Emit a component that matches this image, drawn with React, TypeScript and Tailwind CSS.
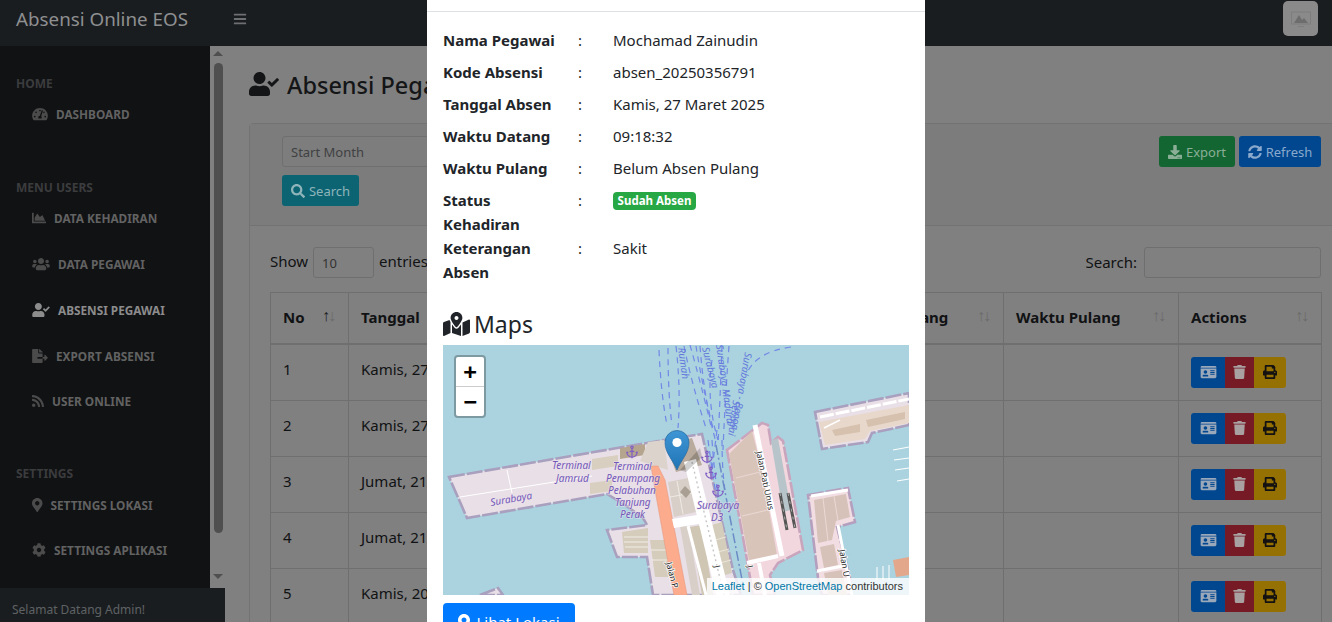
import { Anchor } from 'lucide-react';
import {
  FaBars, FaChartArea, FaCog, FaDownload, FaFileExport, FaIdCard, FaMapMarkedAlt, FaMapMarkerAlt,
  FaPrint, FaRss, FaSearch, FaSyncAlt, FaTachometerAlt, FaTrash, FaUserCheck, FaUsers,
} from 'react-icons/fa';

const rows = [
  { no: 1, tanggal: 'Kamis, 27 Maret 2025', nama: 'Mochamad Zainudin', datang: '09:18:32' },
  { no: 2, tanggal: 'Kamis, 27 Maret 2025', nama: 'Siti Aminah', datang: '08:02:11' },
  { no: 3, tanggal: 'Jumat, 21 Maret 2025', nama: 'Mochamad Zainudin', datang: '08:15:40' },
  { no: 4, tanggal: 'Jumat, 21 Maret 2025', nama: 'Siti Aminah', datang: '07:58:03' },
  { no: 5, tanggal: 'Kamis, 20 Maret 2025', nama: 'Mochamad Zainudin', datang: '08:21:17' },
];

const details = [
  { label: 'Nama Pegawai', value: 'Mochamad Zainudin' },
  { label: 'Kode Absensi', value: 'absen_20250356791' },
  { label: 'Tanggal Absen', value: 'Kamis, 27 Maret 2025' },
  { label: 'Waktu Datang', value: '09:18:32' },
  { label: 'Waktu Pulang', value: 'Belum Absen Pulang' },
];

function SortArrows({ active }: { active?: boolean }) {
  return (
    <span className="text-[16px] leading-[20px] tracking-[-2px] whitespace-nowrap pr-[2px] font-normal">
      <span className={active ? 'text-[#222]' : 'text-[#6b6b6b]'}>↑</span>
      <span className="text-[#6b6b6b]">↓</span>
    </span>
  );
}

function NavItem({ icon, label, active }: { icon: React.ReactNode; label: string; active?: boolean }) {
  return (
    <div className={`h-[45.8px] pb-[1px] pl-8 flex items-center gap-2 text-[11.8px] font-bold ${active ? 'text-[#8c8c8c]' : 'text-[#626262]'}`}>
      <span className={active ? 'text-[#8c8c8c]' : 'text-[#4b4b4b]'}>{icon}</span>
      <span>{label}</span>
    </div>
  );
}

function NavHeader({ label, className }: { label: string; className?: string }) {
  return <div className={`h-[17px] pl-4 text-[12px] leading-[17px] font-bold text-[#3b3c3e] ${className || ''}`}>{label}</div>;
}

function MapTiles() {
  const lane = 'fill-none stroke-[#7488e6] stroke-[1.2]';
  const label = { fontFamily: '"Noto Sans", sans-serif', fontStyle: 'italic', fontSize: 10, fill: '#7458b8', stroke: '#e9e2ee', strokeWidth: 1.5, paintOrder: 'stroke', strokeOpacity: 0.6 } as const;
  const channel = { fontFamily: '"Noto Sans", sans-serif', fontStyle: 'italic', fontSize: 10, fill: '#6478dc' } as const;
  const road = { fontFamily: '"Noto Sans", sans-serif', fontSize: 8.5, fill: '#222', stroke: '#fff', strokeWidth: 1.5, paintOrder: 'stroke' } as const;
  const edge = { stroke: '#a99fbe', strokeWidth: 2.6, strokeDasharray: '16 2' };
  return (
    <svg viewBox="443 345 466 250" className="block w-[466px] h-[250px]">
      <rect x="443" y="345" width="466" height="250" fill="#aad3df" />

      {/* piers */}
      <path d="M449 477L664 440L702 434L733 570L741 595H653L647 557H617L607 530L647 525L643 518L625 505L607 494L467 518Z" fill="#e9dfe6" {...edge} />
      <path d="M727 450L762 423L768 425L771 443L778 437L783 441L803 550L778 563L770 575L775 595H753L747 560Z" fill="#f2d7de" {...edge} stroke="#c9a5bd" />
      <path d="M815 412L909 393V425L872 433L868 442L822 449Z" fill="#e9dfe6" {...edge} />
      <path d="M808 495L848 488L855 522L837 527L850 578V595H822L818 578Z" fill="#f2dde3" {...edge} stroke="#b49fbe" />
      <path d="M480 595L498 588L503 595Z" fill="#e9dfe6" {...edge} />

      {/* west pier detail */}
      <path d="M460 497L592 476M507 470L512 493" stroke="#fff" strokeWidth="1" fill="none" />
      <path d="M620 448L645 444V455L620 459Z" fill="#b5a58f" />
      <path d="M592 459L618 455V466L592 470ZM590 483L612 480V491L590 494Z" fill="#d9cfc0" />
      <path d="M648 442L664 440L668 470L652 465L640 461Z" fill="#dcd4cc" />
      <path d="M622 532L648 528L648 553H624Z" fill="#d5ccbc" />
      <path d="M624 537H648M624 542H648M625 547H648" stroke="#f1ece6" strokeWidth="1" />
      <path d="M650 540H668L672 577H655Z" fill="#d5ccbc" />
      <path d="M651 550H670M652 560H671" stroke="#f1ece6" strokeWidth="1" />

      {/* central blocks */}
      <path d="M668 482L688 478L696 512L674 517Z" fill="#d8d0c8" />
      <path d="M670 497L692 493M677 481L683 514" stroke="#efeae5" strokeWidth="1" />
      <path d="M685 486L691 492L686 498L680 492Z" fill="#a99f92" />
      <path d="M680 526L688 525L700 595H692Z" fill="#d8d0c8" />
      <path d="M690 527L702 525L713 595H702Z" fill="#cfc6b4" />
      <path d="M712 525L722 522L732 573L722 576Z" fill="#d5cdbb" />
      <path d="M715 540L726 537M718 552L729 549M720 563L731 560" stroke="#ece7dc" strokeWidth="1" />
      <path d="M666 445L692 438L702 465L676 472Z" fill="#b8aa9c" />

      {/* roads */}
      <path d="M651 466L658 466L665 480L687 595H674L655 490Z" fill="#fcab8d" stroke="#e79a7f" strokeWidth="0.6" />
      <path d="M684 462L696 459L730 595H716Z" fill="#fff" />
      <path d="M692 462L724 595" stroke="#c6c6c6" strokeWidth="1.4" strokeDasharray="2 3" />
      <path d="M672 519L703 514L705 523L674 528Z" fill="#fff" />
      <path d="M688 526L706 595" stroke="#fff" strokeWidth="3" />

      {/* east block */}
      <path d="M729 454L752 431L762 470L777 555L749 560Z" fill="#d9c4ba" />
      <path d="M736 478L760 472M742 516L768 510" stroke="#ead9d3" strokeWidth="1" />
      <path d="M755 425L782 556" stroke="#fff" strokeWidth="5" />
      <path d="M747 563L778 556" stroke="#fff" strokeWidth="4" />
      <path d="M759 563L765 595" stroke="#fff" strokeWidth="4" />
      <path d="M771 441L778 438L791 510L783 512Z" fill="#b7c5ca" />
      <path d="M780 493L787 530M788 493L795 528" stroke="#555" strokeWidth="3" />
      <path d="M780 493L787 530M788 493L795 528" stroke="#ccc" strokeWidth="0.7" strokeDasharray="3 5" />

      {/* north east pier detail */}
      <path d="M820 417L909 399" stroke="#fff" strokeWidth="3" strokeDasharray="14 2" />
      <path d="M819 422L909 405V423L870 431L865 439L825 445Z" fill="#e8d8cb" />
      <path d="M832 430L860 424V432L835 436ZM866 420L905 412V419L868 427Z" fill="#d6c0ae" />
      <path d="M824 428L840 420" stroke="#fff" strokeWidth="1.5" />

      {/* south east block detail */}
      <path d="M814 500L846 494L850 517L836 521L832 540L818 543Z" fill="#d6c2b8" />
      <path d="M823 498L828 541M834 496L838 521" stroke="#ecd9d5" strokeWidth="1" />
      <path d="M820 547L834 544L838 565L824 568Z" fill="#d6c2b8" />
      <path d="M824 573L842 570L847 595H828Z" fill="#d6c2b8" />
      <path d="M811 496L848 490M838 525L852 595M817 571L843 566" stroke="#fff" strokeWidth="3" fill="none" />
      <path d="M893 560L909 557V575L896 577Z" fill="#e3a88c" />
      <path d="M893 450L909 447M894 460L909 458M895 470L909 468M897 481L909 479M877 567V580M883 566V580M889 565V580" stroke="#fff" strokeWidth="1" />

      {/* shipping lanes */}
      <g className={lane} strokeDasharray="6 5">
        <path d="M659 350Q661 395 667 425" />
        <path d="M668 348Q668 395 672 425" />
        <path d="M676 346Q681 390 678 428" />
        <path d="M684 346Q692 385 706 428" />
        <path d="M690 345Q700 380 712 430" />
        <path d="M696 346Q702 385 714 432" />
        <path d="M700 346Q704 400 716 442" />
        <path d="M712 360Q706 400 718 440" />
        <path d="M722 346Q720 400 718 445" />
        <path d="M729 346Q725 400 723 450" />
        <path d="M708 440Q712 470 716 495" />
        <path d="M712 440Q714 470 718 495" />
        <path d="M722 440Q722 470 725 490" />
        <path d="M717 430L712 470" />
        <path d="M791 347Q755 352 746 375" />
      </g>
      <path d="M716 445L744 590" stroke="#6c8bc6" strokeWidth="1.5" strokeDasharray="10 3 2 3" fill="none" />
      <text transform="translate(678 348) rotate(82)" style={channel}>Rumah</text>
      <text transform="translate(702 348) rotate(76)" style={channel}>Surabaya</text>
      <text transform="translate(716 345) rotate(82)" style={channel}>Surabaya Madura</text>
      <text transform="translate(745 352) rotate(100)" style={channel}>Surabaya - Benoa</text>
      <text transform="translate(733 400) rotate(98)" style={channel}>Sebagai</text>

      {/* anchors */}
      <Anchor x="625" y="445" width="14" height="14" color="#7e5cc6" strokeWidth={2} />
      <Anchor x="700" y="450" width="14" height="14" color="#7e5cc6" strokeWidth={2} />
      <Anchor x="704" y="466" width="14" height="14" color="#7e5cc6" strokeWidth={2} />
      <Anchor x="711" y="484" width="14" height="14" color="#7e5cc6" strokeWidth={2} />

      {/* place labels */}
      <text x="552" y="469" style={label}>Terminal</text>
      <text x="556" y="482" style={label}>Jamrud</text>
      <text transform="translate(491 506) rotate(-10)" style={label}>Surabaya</text>
      <text x="613" y="470" style={label}>Terminal</text>
      <text x="606" y="482" style={label}>Penumpang</text>
      <text x="608" y="494" style={label}>Pelabuhan</text>
      <text x="615" y="506" style={label}>Tanjung</text>
      <text x="620" y="518" style={label}>Perak</text>
      <text x="697" y="509" style={label}>Surabaya</text>
      <text x="711" y="521" style={label}>D3</text>

      {/* road labels */}
      <text transform="translate(666 563) rotate(76)" style={road}>Jalan P</text>
      <text transform="translate(756 452) rotate(78)" style={road}>Jalan Pati Unus</text>
      <text transform="translate(839 550) rotate(80)" style={road}>Jalan U</text>
      <text transform="translate(714 566) rotate(78)" style={road}>J</text>
      <text transform="translate(747 566) rotate(78)" style={road}>J</text>

      {/* marker */}
      <path d="M680 470L700 448L702 457L686 472Z" fill="#000" opacity="0.18" />
      <defs>
        <linearGradient id="pin" x1="0" y1="0" x2="0" y2="1">
          <stop offset="0" stopColor="#3f96d4" />
          <stop offset="1" stopColor="#2074b6" />
        </linearGradient>
      </defs>
      <path d="M677 470C673 460 665 453 665 442.5A12 12 0 0 1 689 442.5C689 453 681 460 677 470Z" fill="url(#pin)" stroke="#2c6fa5" strokeWidth="0.8" />
      <circle cx="677" cy="442.5" r="4.6" fill="#fff" />
    </svg>
  );
}

export default function App() {
  return (
    <div className="relative h-[622px] w-[1332px] overflow-hidden bg-[#808080] text-[15px] leading-6 text-[#111214]" style={{ fontFamily: '"Noto Sans", sans-serif' }}>
      <header className="h-[46px] bg-[#1a1d20] flex items-start">
        <div className="w-[233px] pl-4 text-[18.8px] leading-[38px] text-[#8e8f90]">Absensi Online EOS</div>
        <FaBars className="w-[14px] h-[14px] text-[#6d6f71] mt-[12px]" />
        <div className="ml-auto mr-[14px] mt-[1px] w-[35px] h-[35px] rounded-[5px] bg-[#8a8a8a] flex items-center justify-center">
          <svg viewBox="0 0 20 16" className="w-[20px] h-[16px]" fill="none">
            <rect x="0.5" y="1" width="19" height="12" stroke="#7d7d7d" />
            <path d="M3 12L8 4L11 9L13 7L17 12Z" fill="#6d6d6d" />
            <path d="M7 15.5H13" stroke="#7d7d7d" />
          </svg>
        </div>
      </header>

      <div className="flex">
        <aside className="w-[210px] h-[576px] shrink-0 bg-[#111214] pt-[29px]">
          <NavHeader label="HOME" />
          <NavItem icon={<FaTachometerAlt className="w-[16px] h-[14px]" />} label="DASHBOARD" />
          <NavHeader label="MENU USERS" className="mt-[41px]" />
          <NavItem icon={<FaChartArea className="w-[14px] h-[14px]" />} label="DATA KEHADIRAN" />
          <NavItem icon={<FaUsers className="w-[18px] h-[14px]" />} label="DATA PEGAWAI" />
          <NavItem active icon={<FaUserCheck className="w-[18px] h-[14px]" />} label="ABSENSI PEGAWAI" />
          <NavItem icon={<FaFileExport className="w-[16px] h-[14px]" />} label="EXPORT ABSENSI" />
          <NavItem icon={<FaRss className="w-[12px] h-[14px]" />} label="USER ONLINE" />
          <NavHeader label="SETTINGS" className="mt-[40.5px]" />
          <NavItem icon={<FaMapMarkerAlt className="w-[10.5px] h-[14px]" />} label="SETTINGS LOKASI" />
          <NavItem icon={<FaCog className="w-[14px] h-[14px]" />} label="SETTINGS APLIKASI" />
        </aside>

        <div className="w-[15px] shrink-0 h-[542px] flex flex-col items-center pt-[5px] pl-[1px]">
          <div className="w-0 h-0 border-x-[5px] border-x-transparent border-b-[5px] border-b-[#4f4f4f]" />
          <div className="mt-[7px] w-[9px] h-[470px] rounded-[5px] bg-[#4f4f4f]" />
          <div className="mt-[41px] w-0 h-0 border-x-[5px] border-x-transparent border-t-[5px] border-t-[#4f4f4f]" />
        </div>

        <main className="w-[1092px] shrink-0 ml-[24px]">
          <h1 className="h-[77px] flex items-start pt-[21px] gap-2 text-[23.5px] leading-9 font-medium text-[#141517]">
            <FaUserCheck className="w-[30px] h-[24px] mt-[5px]" />
            <span>Absensi Pegawai</span>
          </h1>

          <section className="border border-[#737373] rounded-[4px] w-[1092px]">
            <div className="bg-[#7c7c7c] border-b border-[#737373] h-[102px] pt-[12px] pl-[32px] pr-[19px] flex justify-between items-start">
              <div>
                <div className="w-[300px] h-[31px] border border-[#6f6f6f] rounded-[3px] bg-[#7d7d7d] pl-2 text-[13px] leading-[30px] text-[#3f4143]">Start Month</div>
                <button className="mt-2 h-[31px] w-[77px] rounded-[3px] bg-[#0c6473] flex items-center justify-center gap-1 text-[13px] text-[#8fb4ba]">
                  <FaSearch className="w-[14px] h-[14px]" />
                  Search
                </button>
              </div>
              <div className="flex gap-1">
                <button className="h-[31px] w-[76px] rounded-[3px] bg-[#136631] flex items-center justify-center gap-1 text-[13px] text-[#8aae96]">
                  <FaDownload className="w-[14px] h-[14px]" />
                  Export
                </button>
                <button className="h-[31px] w-[82px] rounded-[3px] bg-[#00478f] flex items-center justify-center gap-1 text-[13px] text-[#8aa9cc]">
                  <FaSyncAlt className="w-[14px] h-[14px]" />
                  Refresh
                </button>
              </div>
            </div>

            <div className="px-[20px] pt-[21px]">
              <div className="h-[31px] flex items-center justify-between">
                <div className="flex items-center gap-[5px]">
                  <span className="-mt-[4px] w-[38px]">Show</span>
                  <div className="w-[61px] h-[31px] border border-[#6f6f6f] rounded-[3px] pl-2 text-[13px] leading-[31px] text-[#333]">10</div>
                  <span className="-mt-[4px]">entries</span>
                </div>
                <div className="flex items-center gap-[7px] -mr-px">
                  <span className="-mt-[2px]">Search:</span>
                  <div className="w-[177px] h-[31px] border border-[#6f6f6f] rounded-[3px]" />
                </div>
              </div>

              <table className="mt-[14px] w-[1051px] table-fixed border-collapse">
                <colgroup>
                  <col className="w-[78px]" />
                  <col className="w-[250px]" />
                  <col className="w-[230px]" />
                  <col className="w-[175px]" />
                  <col className="w-[175px]" />
                  <col className="w-[143px]" />
                </colgroup>
                <thead>
                  <tr>
                    {['No', 'Tanggal', 'Nama Pegawai', 'Waktu Datang', 'Waktu Pulang', 'Actions'].map((h, i) => (
                      <th key={h} className="h-[51px] border border-[#6f6f6f] border-b-[2px] px-3 pt-[12px] pb-[12px] text-left align-top font-bold">
                        <div className="flex justify-between">
                          <span>{h}</span>
                          <SortArrows active={i === 0} />
                        </div>
                      </th>
                    ))}
                  </tr>
                </thead>
                <tbody>
                  {rows.map(r => (
                    <tr key={r.no}>
                      <td className="h-[56px] border border-[#6f6f6f] px-3 py-3 align-top">{r.no}</td>
                      <td className="border border-[#6f6f6f] px-3 py-3 align-top">{r.tanggal}</td>
                      <td className="border border-[#6f6f6f] px-3 py-3 align-top">{r.nama}</td>
                      <td className="border border-[#6f6f6f] px-3 py-3 align-top">{r.datang}</td>
                      <td className="border border-[#6f6f6f] px-3 py-3 align-top" />
                      <td className="border border-[#6f6f6f] px-3 py-3 align-top">
                        <div className="flex w-[95px] h-[31px]">
                          <button className="w-[34px] rounded-l-[3px] bg-[#00478f] flex items-center justify-center">
                            <FaIdCard className="w-[17px] h-[14px] text-[#9aa8ba]" />
                          </button>
                          <button className="w-[29px] bg-[#761a25] flex items-center justify-center">
                            <FaTrash className="w-[13px] h-[14px] text-[#a8a0a1]" />
                          </button>
                          <button className="w-[32px] rounded-r-[3px] bg-[#957002] flex items-center justify-center">
                            <FaPrint className="w-[14px] h-[14px] text-[#141210]" />
                          </button>
                        </div>
                      </td>
                    </tr>
                  ))}
                </tbody>
              </table>
            </div>
          </section>
        </main>
      </div>

      <div className="absolute left-0 bottom-0 w-[225px] h-[34px] bg-[#1a1d20] pl-3 text-[12px] leading-[44px] text-[#5f6264]">Selamat Datang Admin!</div>

      <div className="absolute left-[427px] top-0 w-[498px] bg-white text-[#212529]">
        <div className="h-[12px] border-b border-[#dee2e6]" />
        <div className="px-4 pt-4">
          <div className="grid grid-cols-[135px_35px_1fr]">
            {details.map(d => (
              <div key={d.label} className="contents">
                <div className="pb-2 font-bold">{d.label}</div>
                <div className="pb-2">:</div>
                <div className="pb-2">{d.value}</div>
              </div>
            ))}
            <div className="font-bold pr-3">Status Kehadiran</div>
            <div>:</div>
            <div>
              <span className="block w-[83px] h-[18px] rounded-[4px] bg-[#28a745] text-center text-[11.5px] leading-[18px] font-bold text-white mt-[4px]">Sudah Absen</span>
            </div>
            <div className="font-bold pr-3">Keterangan Absen</div>
            <div>:</div>
            <div>Sakit</div>
          </div>

          <h4 className="mt-[26px] h-[35px] flex items-start gap-1 text-[23px] leading-[28px] text-[#212529]">
            <FaMapMarkedAlt className="w-[27px] h-[24px] mt-[2px]" />
            <span>Maps</span>
          </h4>

          <div className="relative w-[466px] h-[250px]">
            <MapTiles />
            <div className="absolute left-[11px] top-[10px] w-[32px] border-2 border-[#7d9aa3] rounded-[4px] bg-white">
              <div className="h-[30px] border-b border-[#ccc] flex items-center justify-center text-[22px] leading-[30px] font-bold text-black" style={{ fontFamily: '"DejaVu Sans Mono", monospace' }}>+</div>
              <div className="h-[29px] flex items-center justify-center text-[22px] leading-[29px] font-bold text-black" style={{ fontFamily: '"DejaVu Sans Mono", monospace' }}>−</div>
            </div>
            <div className="absolute right-0 bottom-0 h-[17px] bg-white/80 pl-[5px] pr-[6px] text-[11px] leading-[17px] text-[#333]" style={{ fontFamily: '"Liberation Sans", sans-serif' }}>
              <span className="text-[#0078a8]">Leaflet</span> | © <span className="text-[#0078a8]">OpenStreetMap</span> contributors
            </div>
          </div>

          <button className="mt-2 h-[38px] w-[132px] rounded-[4px] bg-[#007bff] flex items-center justify-center gap-[6px] text-white">
            <FaMapMarkerAlt className="w-[12px] h-[16px]" />
            Lihat Lokasi
          </button>
        </div>
      </div>
    </div>
  );
}
